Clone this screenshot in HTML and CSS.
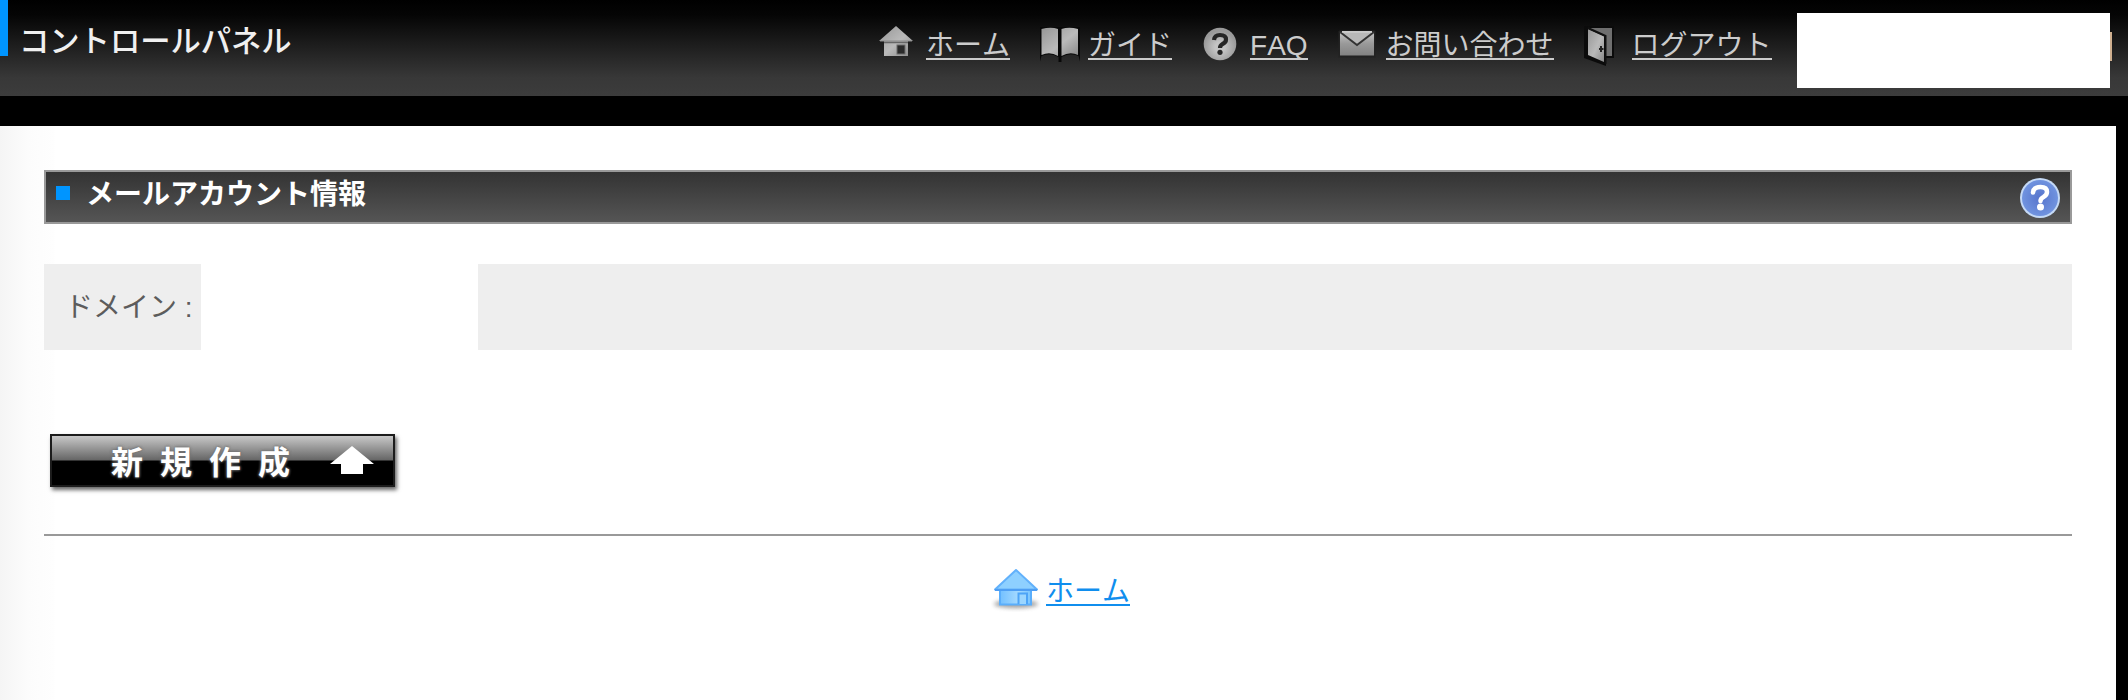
FILE: index.html
```html
<!DOCTYPE html>
<html lang="ja">
<head>
<meta charset="utf-8">
<title>コントロールパネル</title>
<link rel="stylesheet" href="styles.css">
</head>
<body>
<header class="header">
  <div class="brand"><span class="brand-mark"></span><h1 class="brand-name">コントロールパネル</h1></div>
  <nav class="nav">
    <a class="nav-item nav-home" href="#">
      <svg class="icon" width="36" height="32" viewBox="0 0 36 32">
        <defs><linearGradient id="gray" x1="0" y1="0" x2="1" y2="1"><stop offset="0" stop-color="#969696"/><stop offset=".55" stop-color="#bababa"/><stop offset="1" stop-color="#888"/></linearGradient></defs>
        <path d="M18 0L35 15H30V30H6V15H1Z" fill="url(#gray)"/><path d="M2 15H34" stroke="#888" stroke-width="1"/><path d="M6 16.500H30" stroke="#666" stroke-width="1.500"/><rect x="19" y="19" width="8" height="9" fill="#2a2a2a" stroke="#6c6c6c"/>
      </svg><span class="label">ホーム</span></a>
    <a class="nav-item nav-guide" href="#">
      <svg class="icon" width="40" height="36" viewBox="0 0 40 36">
        <path d="M0 1H40V35.500L38.500 30Q30 26 21.500 31V36H18.500V31Q10 26 1.500 30L0 35.500Z" fill="#080808"/>
        <path d="M1.500 3Q11 .500 18 3V30Q10 25 1.500 29ZM21.500 3Q29 .500 38 3V29Q30 25 21.500 30Z" fill="url(#gray)"/>
      </svg><span class="label">ガイド</span></a>
    <a class="nav-item nav-faq" href="#">
      <svg class="icon" width="34" height="34" viewBox="0 0 34 34">
        <defs><radialGradient id="disc" cy=".6"><stop offset=".3" stop-color="#c4c4c4"/><stop offset="1" stop-color="#9a9a9a"/></radialGradient></defs>
        <circle cx="17" cy="17" r="16.300" fill="url(#disc)"/>
        <path d="M11 13Q11.500 8 17 8Q23 8 23 12.500Q23 15.500 19.500 17Q17 18.500 17 21" fill="none" stroke="#252525" stroke-width="4.200"/><circle cx="17" cy="25.300" r="2.600" fill="#252525"/>
      </svg><span class="label">FAQ</span></a>
    <a class="nav-item nav-mail" href="#">
      <svg class="icon" width="38" height="28" viewBox="0 0 38 28">
        <defs><linearGradient id="mail" x1="0" y1="0" x2="0" y2="1"><stop stop-color="#c4c4c4"/><stop offset=".5" stop-color="#999"/><stop offset="1" stop-color="#828282"/></linearGradient></defs>
        <rect x=".5" y=".5" width="37" height="27" rx="1" fill="#222"/><path d="M2 2H36V25.500H2Z" fill="url(#mail)"/><path d="M2 2L19 15L36 2" fill="#b8b8b8" stroke="#333" stroke-width="2"/><path d="M4 1.800H34" stroke="#d4d4d4" stroke-width="1.500"/>
      </svg><span class="label">お問い合わせ</span></a>
    <a class="nav-item nav-logout" href="#">
      <svg class="icon" width="30" height="40" viewBox="0 0 30 40">
        <path d="M0 0H30V32H22V40L0 32Z" fill="#0b0b0b"/><path d="M4 2H28V30H22V10Z" fill="#6f6f6f"/><path d="M4 3L20 10V36L4 29Z" fill="url(#gray)"/><path d="M4 2L21.500 10V38" fill="none" stroke="#111" stroke-width="2"/><path d="M17 20V26M15 23H19.500" stroke="#222" stroke-width="2"/>
      </svg><span class="label">ログアウト</span></a>
  </nav>
  <div class="account"></div>
</header>
<main class="main">
  <div class="section-title">
    <span class="bullet"></span><h2 class="title-text">メールアカウント情報</h2>
    <a class="help" href="#">
      <svg class="icon" width="40" height="40" viewBox="0 0 40 40">
        <defs><radialGradient id="help"><stop stop-color="#5674cc"/><stop offset="1" stop-color="#7093df"/></radialGradient></defs>
        <circle cx="20" cy="20" r="20" fill="#c4d9f6"/><circle cx="20" cy="20" r="18" fill="url(#help)"/>
        <path d="M13 14.500Q13.500 9 20.500 9Q27 9 27 14Q27 17 23.500 19Q20.500 20.500 20.500 23" fill="none" stroke="#fff" stroke-width="4.500" stroke-linecap="round"/><circle cx="20.500" cy="29" r="3.500" fill="#fff"/>
      </svg></a>
  </div>
  <div class="domain-row"><div class="domain-label">ドメイン :</div><div class="domain-value"></div><div class="domain-rest"></div></div>
  <button class="create" type="button"><span class="create-text">新規作成</span>
    <svg class="create-arrow" width="48" height="30" viewBox="0 0 48 30"><path d="M24 1L46 19H35V29H13V19H2Z" fill="#fff"/></svg>
  </button>
  <footer class="footer">
    <a class="footer-home" href="#">
      <svg class="icon" width="50" height="44" viewBox="0 0 50 44">
        <defs><linearGradient id="blue" x1="0" x2="1"><stop stop-color="#73c0ff"/><stop offset=".6" stop-color="#a5daff"/><stop offset="1" stop-color="#78c5ff"/></linearGradient><filter id="soft" x="-20%" y="-80%" width="140%" height="260%"><feGaussianBlur stdDeviation="2"/></filter></defs>
        <ellipse cx="25" cy="36" rx="22" ry="4" fill="#777" opacity=".7" filter="url(#soft)"/>
        <path d="M9 21V36.500H40V21" fill="url(#blue)" stroke="#5aaefb" stroke-width="2"/><path d="M25 2L46 21.500H4Z" fill="#8ed0ff" stroke="#62b1fb" stroke-width="2" stroke-linejoin="round"/><path d="M4 22H46" stroke="#4e9ef3" stroke-width="2"/><path d="M27.500 36V25.500H36V36" fill="#9bd6ff" stroke="#4da4f7" stroke-width="2"/>
      </svg><span class="label">ホーム</span></a>
  </footer>
</main>
</body>
</html>
```
FILE: styles.css
```css
* { box-sizing: border-box; }
body { margin: 0; background: #000; color: #5c5c5c; font: 28px/40px "Liberation Sans", "Noto Sans CJK JP", sans-serif; font-kerning: none; height: 700px; overflow: hidden; }
.header { height: 96px; display: flex; align-items: flex-start; background: linear-gradient(#000 0, #050505 15px, #383838 78px, #3c3c3c 96px); }
.brand { display: flex; width: 878px; }
.brand-mark { width: 8px; height: 56px; background: #0095ff; }
.brand-name { margin: 21px 0 0 11px; font-size: 30.3px; line-height: 42px; font-weight: 500; color: #f0f0f0; white-space: nowrap; }
.nav { display: flex; width: 919px; }
.nav-item { display: flex; color: #ccc; text-decoration: none; white-space: nowrap; }
.icon { display: block; flex: none; }
.label { display: block; height: 40px; line-height: 51px; border-bottom: 2px solid currentColor; }
.nav .label { margin-top: 20px; }
.nav-home { margin-right: 30px; }
.nav-home .icon { margin: 26px 12px 0 0; }
.nav-guide { margin-right: 31px; }
.nav-guide .icon { margin: 26px 8px 0 0; }
.nav-faq { margin-right: 30px; }
.nav-faq .icon { margin: 27px 13px 0 0; }
.nav-mail { margin-right: 30px; }
.nav-mail .icon { margin: 30px 10px 0 0; }
.nav-logout .icon { margin: 26px 18px 0 0; }
.account { width: 315px; height: 75px; margin-top: 13px; background: linear-gradient(#d0b090, #d0b090) 100% 19px / 2px 29px no-repeat, linear-gradient(#fff, #fff) 0 0 / 313px 75px no-repeat; }
.main { width: 2116px; height: 574px; margin-top: 30px; padding: 44px 44px 0; background: linear-gradient(90deg, #f5f5f5, #fcfcfc 28px, #fefefe 54px, #fff 55px); }
.section-title { height: 54px; display: flex; border: 2px solid #999; background: linear-gradient(#333, #555); }
.bullet { width: 14px; height: 14px; margin: 14px 16px 0 10px; background: #0095ff; }
.title-text { margin: 3px 0 0; font-size: 28px; line-height: 40px; font-weight: 700; color: #fff; }
.help { margin: 6px 10px 0 auto; }
.domain-row { display: flex; height: 86px; margin-top: 40px; }
.domain-label { width: 157px; padding: 24px 0 0 21px; background: #eee; white-space: nowrap; }
.domain-value { width: 277px; background: #fff; }
.domain-rest { flex: 1; background: #eee; }
.create { display: flex; width: 345px; height: 53px; margin: 84px 0 0 6px; padding: 0 0 0 59px; border: 2px solid #1c1c1c; background: linear-gradient(#c8c8c8 0, #666 24px, #000 25px); box-shadow: 2px 3px 4px rgba(0,0,0,.6); color: #fff; font: 700 32px/48px "Noto Sans CJK JP", sans-serif; }
.create-text { width: 217px; letter-spacing: 17px; text-align: left; white-space: nowrap; text-shadow: 0 0 3px #555, 0 0 3px #999; }
.create-arrow { margin-top: 9px; }
.footer { display: flex; height: 164px; margin-top: 47px; padding: 32px 0 0 947px; border-top: 2px solid #999; }
.footer-home { display: flex; height: 44px; color: #108eee; text-decoration: none; }
.footer-home .label { margin: -2px 0 0 5px; }
```
